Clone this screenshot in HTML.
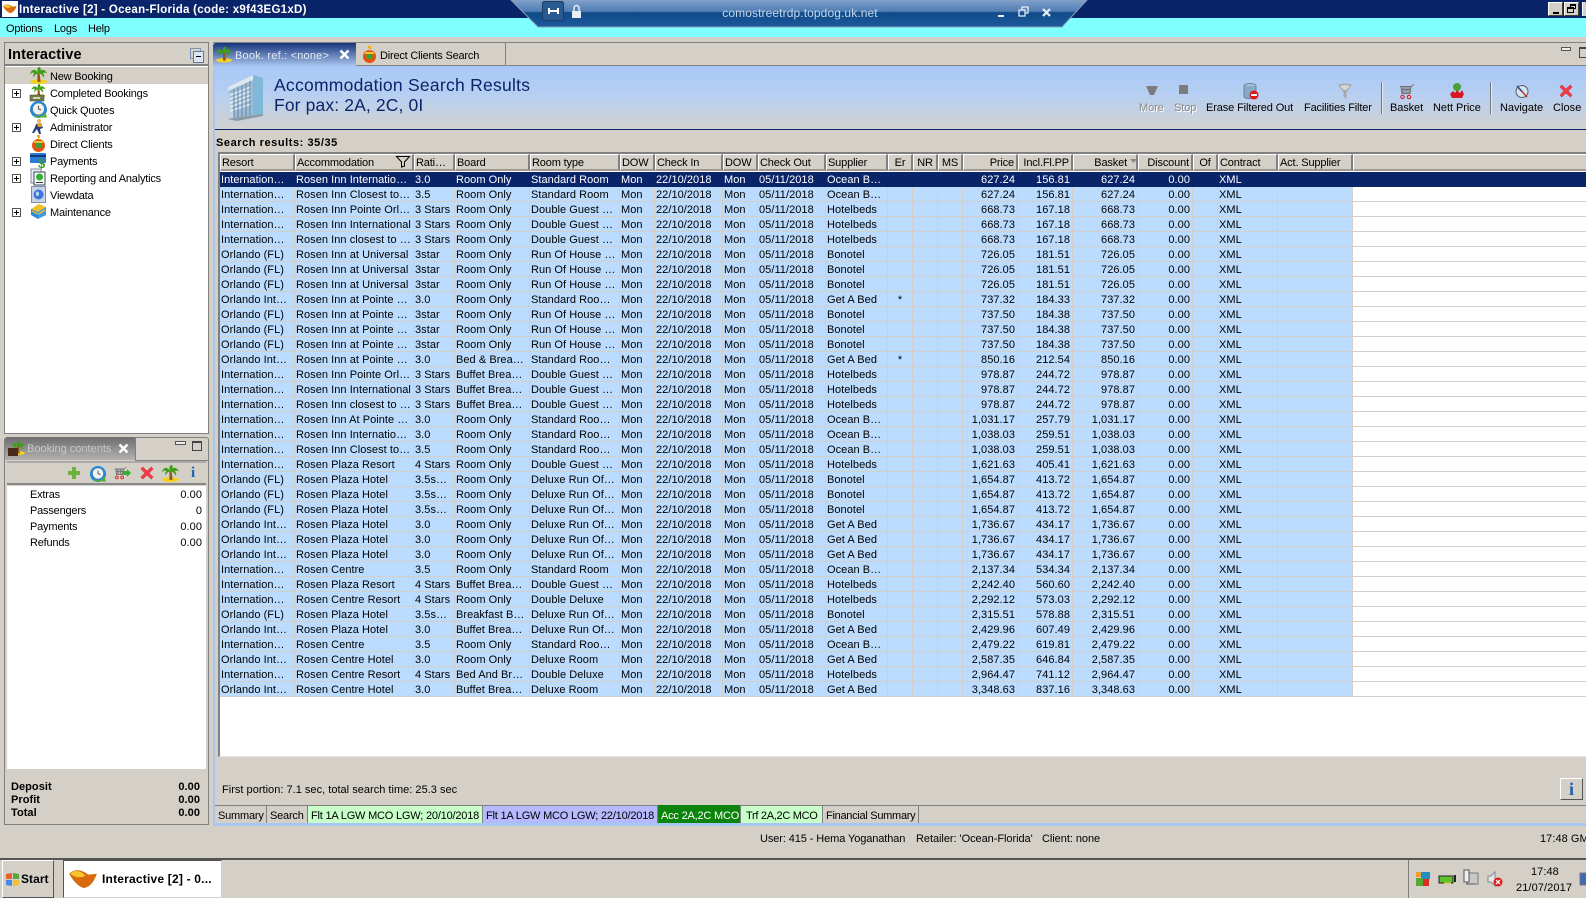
<!DOCTYPE html>
<html><head><meta charset="utf-8"><title>Interactive</title>
<style>
html,body{margin:0;padding:0;width:1586px;height:898px;overflow:hidden;background:#d4d0c8}
body{position:relative;font:11px/17px "Liberation Sans",Arial,sans-serif;color:#000;letter-spacing:.05px}
.a{position:absolute;white-space:nowrap}
.t{letter-spacing:-.2px}
svg{position:absolute;overflow:visible}
.b{font-weight:bold}
table{position:absolute;left:220px;top:172px;border-collapse:separate;border-spacing:0;table-layout:fixed;width:1133px;background:#bbdcff}
td{height:12px;padding:2px 0 0 1px;line-height:12px;border-right:1px solid #d4d0c8;border-bottom:1px solid #d4d0c8;overflow:hidden;white-space:nowrap;box-sizing:content-box}
td:nth-child(14),td:nth-child(15),td:nth-child(16),td:nth-child(17){text-align:right;padding:2px 2px 0 0}
td:nth-child(11){text-align:center;padding:2px 0 0 0}
tr.s td{background:#0a246a;color:#fff;border-color:#0a246a}
.h{position:absolute;top:154px;height:17px;box-sizing:border-box;background:#d4d0c8;border-top:1px solid #fff;border-left:1px solid #fff;border-right:2px solid #808080;border-bottom:2px solid #a09c94;line-height:17px;padding-left:1px;white-space:nowrap;overflow:hidden;letter-spacing:-.15px}
.r{text-align:right;padding-right:2px;padding-left:0}
.tab{position:absolute;top:805px;height:17px;line-height:21px;box-sizing:border-box;border-right:1px solid #808080;padding-left:3px;white-space:nowrap;letter-spacing:-.2px}
.px{position:absolute;width:9px;height:9px;box-sizing:border-box;border:1px solid #555;background:#fff;left:12px}
.px:before{content:"";position:absolute;left:1px;right:1px;top:3px;height:1px;background:#000}
.px:after{content:"";position:absolute;top:1px;bottom:1px;left:3px;width:1px;background:#000}
</style></head><body>
<svg width="0" height="0" style="position:absolute">
<defs>
<symbol id="palm" viewBox="0 0 16 16"><ellipse cx="8" cy="13.8" rx="8" ry="2.200" fill="#f5d020"/><path d="M7 6h2l1 8H7z" fill="#8a5a20"/><path d="M8 6C5 1 1 2 0 7c2-2 3-2 4-1-1 1-1 2-1 4 1-2 3-4 5-4zM8 6c2-5 6-4 8 0-2-1-3-1-4 0 1 1 2 2 1 4-1-2-3-4-5-4zM8 6C6 3 7 0 9 0c2 1 1 4-1 6z" fill="#3f9e16"/></symbol>
<symbol id="clock" viewBox="0 0 16 16"><circle cx="8" cy="8" r="8" fill="#1e88e0"/><circle cx="8" cy="7.500" r="5.500" fill="#eef2f4" stroke="#777" stroke-width=".5"/><path d="M8 4.500V7.500L10.500 8.500" stroke="#555" fill="none"/><path d="M3.500 12.500C7 15.500 12 15 14.500 10.500l1.500 5H5z" fill="#58b030"/></symbol>
<symbol id="x" viewBox="0 0 16 16"><path d="M3 1l5 4.500L13 1l2 2.500L10.500 8l4.500 4.500-2 2.500L8 10.500 3 15l-2-2.500L5.500 8 1 3.500z" fill="#ee3b46" stroke="#c72530" stroke-width=".5"/></symbol>
<symbol id="logo" viewBox="0 0 30 22"><path d="M0 6C6 0 14 2 20 7l9-1c-2 6-6 14-14 15C9 19 3 12 0 6z" fill="#d86a10"/><path d="M1 6c5-5 12-3 16 2-5 3-11 2-16-2z" fill="#f7c52c"/></symbol>
<symbol id="cart" viewBox="0 0 16 16"><path d="M1 3h11l3-2M2 3l1 7h8l1-7M4 3v7M6 3v7M8 3v7M10 3v7M2.500 6h9" fill="none" stroke="#6e6e6e"/><circle cx="3.500" cy="13.500" r="1.700" fill="none" stroke="#e01010"/><circle cx="10" cy="13.500" r="1.700" fill="none" stroke="#e01010"/></symbol>
</defs></svg>

<!-- title bar -->
<div class="a" style="left:0;top:0;width:1586px;height:18px;background:#0a246a"></div>
<div class="a" style="left:2px;top:1px;width:16px;height:16px;background:#fff"></div>
<svg style="left:3px;top:3px" width="14" height="11"><use href="#logo" width="14" height="11"/></svg>
<div class="a b" style="left:19px;top:2px;color:#fff;font-size:11.5px;line-height:16px;letter-spacing:.27px">Interactive [2] - Ocean-Florida (code: x9f43EG1xD)</div>
<div class="a" style="left:0;top:18px;width:1586px;height:19px;background:#80ffff"></div>
<div class="a t" style="left:6px;top:21px">Options</div>
<div class="a t" style="left:54px;top:21px">Logs</div>
<div class="a t" style="left:88px;top:21px">Help</div>

<!-- window buttons -->
<div class="a" style="left:1548px;top:2px;width:15px;height:14px;box-sizing:border-box;background:#d4d0c8;border:1px solid;border-color:#fff #404040 #404040 #fff"><div class="a" style="left:4px;top:9px;width:6px;height:2px;background:#000"></div></div>
<div class="a" style="left:1564px;top:2px;width:15px;height:14px;box-sizing:border-box;background:#d4d0c8;border:1px solid;border-color:#fff #404040 #404040 #fff"><div class="a" style="left:5px;top:1px;width:6px;height:5px;border:1px solid #000;border-top-width:2px;box-sizing:border-box"></div><div class="a" style="left:2px;top:4px;width:7px;height:6px;border:1px solid #000;border-top-width:2px;box-sizing:border-box;background:#d4d0c8"></div></div>
<div class="a" style="left:1582px;top:2px;width:4px;height:14px;background:#d4d0c8;border-left:1px solid #fff"></div>

<!-- RDP bar -->
<svg style="left:0;top:0" width="1586" height="30">
<defs><linearGradient id="rdp" x1="0" y1="0" x2="0" y2="1"><stop offset="0" stop-color="#80a0cc"/><stop offset=".42" stop-color="#4f7db3"/><stop offset=".47" stop-color="#104a88"/><stop offset="1" stop-color="#1c5a9c"/></linearGradient></defs>
<path d="M511 0H1087L1062 27H538z" fill="url(#rdp)" stroke="#8ba0b8" stroke-width="1"/>
<rect x="542.500" y="1.500" width="21" height="19" rx="2" fill="#2a5a90" stroke="#1c3c68"/>
<path d="M549 8v6M558 8v6M550 11h8" fill="none" stroke="#fff" stroke-width="2"/>
<path d="M572 11h9v7h-9z" fill="#e6edf4"/><path d="M574 11V8a2.500 2.500 0 0 1 5 0v3" fill="none" stroke="#e6edf4" stroke-width="1.500"/>
<path d="M998 16h6" stroke="#e6edf4" stroke-width="2"/>
<path d="M1019 10h6v6h-6zM1022 10V7h6v6h-3" fill="none" stroke="#e6edf4" stroke-width="1.300"/>
<path d="M1043 9l7 7M1050 9l-7 7" stroke="#e6edf4" stroke-width="2.200"/>
</svg>
<div class="a" style="left:722px;top:5px;width:156px;text-align:center;color:#c5d6ea;font-size:12px;letter-spacing:.1px">comostreetrdp.topdog.uk.net</div>

<!-- left top panel -->
<div class="a" style="left:4px;top:42px;width:205px;height:392px;box-sizing:border-box;border:1px solid #808080;background:#fff"></div>
<div class="a" style="left:5px;top:43px;width:203px;height:23px;background:#d4d0c8;border-bottom:2px solid #808080;box-sizing:border-box"></div>
<div class="a b" style="left:8px;top:47px;font-size:14.5px;line-height:16px;letter-spacing:.1px">Interactive</div>
<div class="a" style="left:190px;top:48px;width:9px;height:9px;border:1px solid #7d94b8"></div>
<div class="a" style="left:193px;top:51px;width:9px;height:10px;border:1px solid #5a7aa8;background:#dde6f2"><div class="a" style="left:2px;top:4px;width:5px;height:1px;background:#000"></div></div>
<div class="a" style="left:5px;top:67px;width:203px;height:17px;background:#d4d0c8"></div>
<div class="a t" style="left:50px;top:69px">New Booking</div>
<div class="a t" style="left:50px;top:86px">Completed Bookings</div>
<div class="a t" style="left:50px;top:103px">Quick Quotes</div>
<div class="a t" style="left:50px;top:120px">Administrator</div>
<div class="a t" style="left:50px;top:137px">Direct Clients</div>
<div class="a t" style="left:50px;top:154px">Payments</div>
<div class="a t" style="left:50px;top:171px">Reporting and Analytics</div>
<div class="a t" style="left:50px;top:188px">Viewdata</div>
<div class="a t" style="left:50px;top:205px">Maintenance</div>
<div class="px" style="top:89px"></div><div class="px" style="top:123px"></div><div class="px" style="top:157px"></div><div class="px" style="top:174px"></div><div class="px" style="top:208px"></div>
<svg style="left:30px;top:67px" width="17" height="17"><use href="#palm" width="17" height="17"/></svg>
<svg style="left:30px;top:84px" width="17" height="17"><use href="#palm" width="17" height="14"/><rect x="0" y="11" width="14" height="6" fill="#6f7d4a" stroke="#444" stroke-width=".5"/><rect x="3" y="13" width="7" height="2" fill="#d8d8b0"/></svg>
<svg style="left:30px;top:101px" width="17" height="17"><use href="#clock" width="17" height="17"/></svg>
<svg style="left:31px;top:118px" width="16" height="17"><circle cx="8" cy="3" r="2" fill="#e8b070"/><path d="M5 6l5-1 2 5-3 1 1 5H8L6 11 3 15H1l3-6z" fill="#283c7a"/><path d="M6 6l4-1 1 4H7z" fill="#e0a020"/></svg>
<svg style="left:31px;top:135px" width="15" height="17"><circle cx="7.500" cy="10.500" r="6.500" fill="#e85010"/><rect x="4.500" y="8" width="6" height="5" fill="#3da030"/><path d="M6 0h3v3H8v2H7V2H6z" fill="#f0b010"/><path d="M3 6h9v2H3z" fill="#f5c030"/></svg>
<svg style="left:30px;top:152px" width="17" height="17"><rect x="0" y="1" width="16" height="10" rx="1" fill="#2a7ad8"/><rect x="0" y="3" width="16" height="2" fill="#103a78"/><text x="8" y="16" font-family="Liberation Sans" font-weight="bold" font-size="13" fill="#3aa020">$</text></svg>
<svg style="left:31px;top:169px" width="15" height="17"><rect x="0" y="0" width="10" height="14" fill="#e8eef5" stroke="#7a8aa0"/><rect x="3" y="3" width="11" height="13" fill="#fff" stroke="#345"/><circle cx="8.500" cy="8" r="3.500" fill="#30b030"/><rect x="5" y="13" width="7" height="1" fill="#333"/></svg>
<svg style="left:31px;top:186px" width="15" height="17"><rect x=".5" y=".5" width="14" height="16" fill="#c8d4e6" stroke="#7f8ea8"/><circle cx="7.500" cy="8.500" r="5" fill="#3c78d8"/><path d="M5 6c2-1 3 0 3 2s-2 3-3 1z" fill="#b8d8f8"/></svg>
<svg style="left:30px;top:203px" width="17" height="17"><path d="M1 6l8-5 7 3-8 5z" fill="#f0c028"/><path d="M1 6l7 3v7L1 12z" fill="#2a8ad8"/><path d="M8 9l8-5v8l-8 4z" fill="#3a9ae8"/><path d="M2 8l6 3M9 11l6-4" stroke="#f0c028" stroke-width="1.500"/></svg>

<!-- booking contents -->
<div class="a" style="left:4px;top:437px;width:205px;height:388px;box-sizing:border-box;border:1px solid #808080;border-radius:3px 3px 0 0"></div>
<div class="a" style="left:5px;top:437px;width:131px;height:23px;background:linear-gradient(#6d6d6f,#b4b2b0);border-radius:3px 3px 0 0"></div>
<div class="a" style="left:135px;top:460px;width:73px;height:1px;background:#808080"></div>
<div class="a" style="left:135px;top:437px;width:1px;height:24px;background:#808080"></div>
<svg style="left:8px;top:440px" width="17" height="17"><use href="#palm" x="3" width="14" height="16"/><rect x="0" y="8" width="10" height="8" fill="#4a2a18"/></svg>
<div class="a" style="left:27px;top:441px;color:#c9c9c6;letter-spacing:0">Booking contents</div>
<svg style="left:118px;top:443px" width="11" height="11"><path d="M1.500 1.500l8 8M9.500 1.500l-8 8" stroke="#fff" stroke-width="2.500"/></svg>
<div class="a" style="left:175px;top:441px;width:9px;height:2px;border:1px solid #555;background:#eee"></div>
<div class="a" style="left:192px;top:441px;width:8px;height:7px;border:1px solid #444;border-top-width:2px"></div>
<div class="a" style="left:7px;top:461px;width:199px;height:24px;background:#d4d0c8;border-top:2px solid #aaa;border-bottom:2px solid #888;box-sizing:border-box"></div>
<svg style="left:68px;top:467px" width="12" height="12"><path d="M4 0h4v4h4v4H8v4H4V8H0V4h4z" fill="#6cb23c"/></svg>
<svg style="left:90px;top:466px" width="16" height="16"><use href="#clock" width="16" height="16"/></svg>
<svg style="left:114px;top:465px" width="17" height="16"><use href="#cart" width="13" height="16"/><path d="M9 6h4V4l4 4-4 4v-2H9z" fill="#30b030"/></svg>
<svg style="left:140px;top:466px" width="14" height="14"><use href="#x" width="14" height="14"/></svg>
<svg style="left:162px;top:465px" width="17" height="17"><use href="#palm" width="17" height="17"/></svg>
<div class="a b" style="left:191px;top:465px;font:bold 15px/16px 'Liberation Serif',serif;color:#1d5fb0">i</div>
<div class="a" style="left:7px;top:486px;width:199px;height:283px;background:#fff"></div>
<div class="a t" style="left:30px;top:487px">Extras</div><div class="a" style="right:1384px;top:487px">0.00</div>
<div class="a t" style="left:30px;top:503px">Passengers</div><div class="a" style="right:1384px;top:503px">0</div>
<div class="a t" style="left:30px;top:519px">Payments</div><div class="a" style="right:1384px;top:519px">0.00</div>
<div class="a t" style="left:30px;top:535px">Refunds</div><div class="a" style="right:1384px;top:535px">0.00</div>
<div class="a b" style="left:11px;top:779px">Deposit</div><div class="a b" style="right:1386px;top:779px">0.00</div>
<div class="a b" style="left:11px;top:792px">Profit</div><div class="a b" style="right:1386px;top:792px">0.00</div>
<div class="a b" style="left:11px;top:805px">Total</div><div class="a b" style="right:1386px;top:805px">0.00</div>

<!-- right panel -->
<div class="a" style="left:213px;top:43px;width:1373px;height:783px;box-sizing:border-box;border-left:2px solid #a6c8f0;border-bottom:3px solid #a6c8f0"></div>
<div class="a" style="left:213px;top:42px;width:1373px;height:1px;background:#808080"></div>
<div class="a" style="left:213px;top:65px;width:1373px;height:1px;background:#808080"></div>
<div class="a" style="left:213px;top:43px;width:143px;height:23px;background:linear-gradient(#17357c,#a8c4ec);border-radius:3px 0 0 0"></div>
<svg style="left:216px;top:46px" width="16" height="17"><use href="#palm" width="16" height="17"/></svg>
<div class="a" style="left:235px;top:48px;color:#e4ebf5;letter-spacing:.2px">Book. ref.: &lt;none&gt;</div>
<svg style="left:339px;top:49px" width="11" height="11"><path d="M1.500 1.500l8 8M9.500 1.500l-8 8" stroke="#fff" stroke-width="2.500"/></svg>
<div class="a" style="left:505px;top:43px;width:1px;height:22px;background:#808080"></div>
<svg style="left:362px;top:46px" width="15" height="17"><circle cx="7.500" cy="10.500" r="6.500" fill="#e85010"/><rect x="4.500" y="8" width="6" height="5" fill="#3da030"/><path d="M6 0h3v3H8v2H7V2H6z" fill="#f0b010"/><path d="M3 6h9v2H3z" fill="#f5c030"/></svg>
<div class="a t" style="left:380px;top:48px">Direct Clients Search</div>
<div class="a" style="left:1561px;top:47px;width:8px;height:2px;border:1px solid #555;background:#eee"></div>
<div class="a" style="left:1579px;top:47px;width:8px;height:8px;border:1px solid #444;border-top-width:2px"></div>

<!-- banner -->
<div class="a" style="left:215px;top:66px;width:1371px;height:63px;background:linear-gradient(#a8c8f7,#b6cff2 45%,#d2d2d0)"></div>
<div class="a" style="left:215px;top:129px;width:1371px;height:1px;background:#0a246a"></div>
<svg style="left:227px;top:73px" width="38" height="48">
<path d="M1 14L26 2v42L8 47z" fill="#9cbcd6"/><path d="M26 2l10 3v36l-10 4z" fill="#7fb8d8"/><path d="M1 14L26 2v5L1 18z" fill="#dfe7ee"/>
<path d="M3 22L24 14M3 26L24 18M3 30L24 22M3 34L24 26M3 38L24 31" stroke="#e8f0f6" stroke-width="1.500"/>
<path d="M7 16v30M11 14v32M15 12v33M19 10v34M23 8v36" stroke="#6488a6" stroke-width="1"/><path d="M0 46l36-5v2L10 48z" fill="#8a9aa6"/>
</svg>
<div class="a" style="left:274px;top:75px;font-size:17.5px;line-height:20px;color:#0a246a;letter-spacing:.26px">Accommodation Search Results</div>
<div class="a" style="left:274px;top:95px;font-size:17.5px;line-height:20px;color:#0a246a;letter-spacing:.13px">For pax: 2A, 2C, 0I</div>

<!-- toolbar -->
<svg style="left:1145px;top:84px" width="14" height="12"><path d="M1 2h12L9 11H5z" fill="#7c7c7c"/></svg>
<svg style="left:1179px;top:85px" width="9" height="9"><rect width="9" height="9" fill="#7c7c7c"/></svg>
<svg style="left:1243px;top:83px" width="16" height="17"><ellipse cx="7" cy="3" rx="6" ry="2.500" fill="#a8c0d8" stroke="#6f8296"/><path d="M1 3v11c2 2 10 2 12 0V3" fill="#88a8c8" stroke="#6f8296"/><circle cx="11" cy="12" r="4.500" fill="#e01818"/><rect x="8" y="11" width="6" height="2" fill="#fff"/></svg>
<svg style="left:1338px;top:83px" width="14" height="17"><path d="M0 2c3-2 11-2 14 0L8.500 9v7l-3-2V9z" fill="#a8a8a8"/><path d="M2 3c3-1 7-1 10 0L8 7H6z" fill="#d8d8d8"/></svg>
<svg style="left:1399px;top:83px" width="16" height="17"><use href="#cart" width="16" height="17"/></svg>
<svg style="left:1449px;top:83px" width="16" height="16"><circle cx="8" cy="4" r="4" fill="#48a038"/><path d="M1 11l3-3 2 2 2-3 3 3 2-3 2 4-2 4H3z" fill="#d81820"/></svg>
<svg style="left:1514px;top:83px" width="16" height="17"><circle cx="8" cy="8.500" r="6" fill="#d8e4f0" stroke="#506070"/><path d="M3 3l10 11" stroke="#c83020" stroke-width="1.500"/><path d="M3 3L8 8.500" stroke="#2050a0" stroke-width="1.500"/></svg>
<svg style="left:1559px;top:84px" width="14" height="14"><use href="#x" width="14" height="14"/></svg>
<div class="a" style="left:1139px;top:100px;color:#888;text-shadow:1px 1px 0 #fff;letter-spacing:-.1px">More</div>
<div class="a" style="left:1174px;top:100px;color:#888;text-shadow:1px 1px 0 #fff;letter-spacing:-.1px">Stop</div>
<div class="a" style="left:1206px;top:100px;letter-spacing:-.12px">Erase Filtered Out</div>
<div class="a" style="left:1304px;top:100px;letter-spacing:-.15px">Facilities Filter</div>
<div class="a" style="left:1390px;top:100px;letter-spacing:-.1px">Basket</div>
<div class="a" style="left:1433px;top:100px;letter-spacing:-.05px">Nett Price</div>
<div class="a" style="left:1500px;top:100px;letter-spacing:-.05px">Navigate</div>
<div class="a" style="left:1553px;top:100px">Close</div>
<div class="a" style="left:1381px;top:82px;width:2px;height:32px;background:#e8e8e8;border-left:1px solid #777;box-sizing:border-box"></div>
<div class="a" style="left:1490px;top:82px;width:2px;height:32px;background:#e8e8e8;border-left:1px solid #777;box-sizing:border-box"></div>

<div class="a b" style="left:216px;top:135px;letter-spacing:.56px">Search results: 35/35</div>

<!-- grid frame -->
<div class="a" style="left:218px;top:152px;width:1368px;height:605px;background:#fff;border-top:2px solid #808080;border-left:2px solid #808080;border-bottom:1px solid #e8e4dc;box-sizing:border-box"></div>
<div class="a" style="left:1353px;top:172px;width:233px;height:525px;background:repeating-linear-gradient(#fff 0 14px,#d4d0c8 14px 15px)"></div>
<div class="h" style="left:220px;width:75px">Resort</div>
<div class="h" style="left:295px;width:119px">Accommodation<svg style="left:100px;top:1px" width="14" height="11"><path d="M.5.5h13L8.500 6v4l-3 1V6z" fill="none" stroke="#000"/></svg></div>
<div class="h" style="left:414px;width:41px">Rati…</div>
<div class="h" style="left:455px;width:75px">Board</div>
<div class="h" style="left:530px;width:90px">Room type</div>
<div class="h" style="left:620px;width:35px">DOW</div>
<div class="h" style="left:655px;width:68px">Check In</div>
<div class="h" style="left:723px;width:35px">DOW</div>
<div class="h" style="left:758px;width:68px">Check Out</div>
<div class="h" style="left:826px;width:62px">Supplier</div>
<div class="h" style="left:888px;width:25px;text-align:center;padding:0">Er</div>
<div class="h" style="left:913px;width:25px;text-align:center;padding:0">NR</div>
<div class="h" style="left:938px;width:25px;text-align:center;padding:0">MS</div>
<div class="h r" style="left:963px;width:55px">Price</div>
<div class="h r" style="left:1018px;width:55px">Incl.Fl.PP</div>
<div class="h r" style="left:1073px;width:65px;padding-right:9px">Basket<svg style="left:56px;top:4px" width="7" height="4"><path d="M0 0h7L3.500 4z" fill="#8a8a8a"/></svg></div>
<div class="h r" style="left:1138px;width:55px">Discount</div>
<div class="h" style="left:1193px;width:25px;text-align:center;padding:0">Of</div>
<div class="h" style="left:1218px;width:60px">Contract</div>
<div class="h" style="left:1278px;width:75px">Act. Supplier</div>
<div class="h" style="left:1353px;width:233px;border-right:0"></div>

<table>
<colgroup><col style="width:75px"><col style="width:119px"><col style="width:41px"><col style="width:75px"><col style="width:90px"><col style="width:35px"><col style="width:68px"><col style="width:35px"><col style="width:68px"><col style="width:62px"><col style="width:25px"><col style="width:25px"><col style="width:25px"><col style="width:55px"><col style="width:55px"><col style="width:65px"><col style="width:55px"><col style="width:25px"><col style="width:60px"><col style="width:75px"></colgroup>
<tr class="s"><td>Internation…<td>Rosen Inn Internatio…<td>3.0<td>Room Only<td>Standard Room<td>Mon<td>22/10/2018<td>Mon<td>05/11/2018<td>Ocean B…<td><td><td><td>627.24<td>156.81<td>627.24<td>0.00<td><td>XML<td>
<tr><td>Internation…<td>Rosen Inn Closest to…<td>3.5<td>Room Only<td>Standard Room<td>Mon<td>22/10/2018<td>Mon<td>05/11/2018<td>Ocean B…<td><td><td><td>627.24<td>156.81<td>627.24<td>0.00<td><td>XML<td>
<tr><td>Internation…<td>Rosen Inn Pointe Orl…<td>3 Stars<td>Room Only<td>Double Guest …<td>Mon<td>22/10/2018<td>Mon<td>05/11/2018<td>Hotelbeds<td><td><td><td>668.73<td>167.18<td>668.73<td>0.00<td><td>XML<td>
<tr><td>Internation…<td>Rosen Inn International<td>3 Stars<td>Room Only<td>Double Guest …<td>Mon<td>22/10/2018<td>Mon<td>05/11/2018<td>Hotelbeds<td><td><td><td>668.73<td>167.18<td>668.73<td>0.00<td><td>XML<td>
<tr><td>Internation…<td>Rosen Inn closest to …<td>3 Stars<td>Room Only<td>Double Guest …<td>Mon<td>22/10/2018<td>Mon<td>05/11/2018<td>Hotelbeds<td><td><td><td>668.73<td>167.18<td>668.73<td>0.00<td><td>XML<td>
<tr><td>Orlando (FL)<td>Rosen Inn at Universal<td>3star<td>Room Only<td>Run Of House …<td>Mon<td>22/10/2018<td>Mon<td>05/11/2018<td>Bonotel<td><td><td><td>726.05<td>181.51<td>726.05<td>0.00<td><td>XML<td>
<tr><td>Orlando (FL)<td>Rosen Inn at Universal<td>3star<td>Room Only<td>Run Of House …<td>Mon<td>22/10/2018<td>Mon<td>05/11/2018<td>Bonotel<td><td><td><td>726.05<td>181.51<td>726.05<td>0.00<td><td>XML<td>
<tr><td>Orlando (FL)<td>Rosen Inn at Universal<td>3star<td>Room Only<td>Run Of House …<td>Mon<td>22/10/2018<td>Mon<td>05/11/2018<td>Bonotel<td><td><td><td>726.05<td>181.51<td>726.05<td>0.00<td><td>XML<td>
<tr><td>Orlando Int…<td>Rosen Inn at Pointe …<td>3.0<td>Room Only<td>Standard Roo…<td>Mon<td>22/10/2018<td>Mon<td>05/11/2018<td>Get A Bed<td>*<td><td><td>737.32<td>184.33<td>737.32<td>0.00<td><td>XML<td>
<tr><td>Orlando (FL)<td>Rosen Inn at Pointe …<td>3star<td>Room Only<td>Run Of House …<td>Mon<td>22/10/2018<td>Mon<td>05/11/2018<td>Bonotel<td><td><td><td>737.50<td>184.38<td>737.50<td>0.00<td><td>XML<td>
<tr><td>Orlando (FL)<td>Rosen Inn at Pointe …<td>3star<td>Room Only<td>Run Of House …<td>Mon<td>22/10/2018<td>Mon<td>05/11/2018<td>Bonotel<td><td><td><td>737.50<td>184.38<td>737.50<td>0.00<td><td>XML<td>
<tr><td>Orlando (FL)<td>Rosen Inn at Pointe …<td>3star<td>Room Only<td>Run Of House …<td>Mon<td>22/10/2018<td>Mon<td>05/11/2018<td>Bonotel<td><td><td><td>737.50<td>184.38<td>737.50<td>0.00<td><td>XML<td>
<tr><td>Orlando Int…<td>Rosen Inn at Pointe …<td>3.0<td>Bed &amp; Brea…<td>Standard Roo…<td>Mon<td>22/10/2018<td>Mon<td>05/11/2018<td>Get A Bed<td>*<td><td><td>850.16<td>212.54<td>850.16<td>0.00<td><td>XML<td>
<tr><td>Internation…<td>Rosen Inn Pointe Orl…<td>3 Stars<td>Buffet Brea…<td>Double Guest …<td>Mon<td>22/10/2018<td>Mon<td>05/11/2018<td>Hotelbeds<td><td><td><td>978.87<td>244.72<td>978.87<td>0.00<td><td>XML<td>
<tr><td>Internation…<td>Rosen Inn International<td>3 Stars<td>Buffet Brea…<td>Double Guest …<td>Mon<td>22/10/2018<td>Mon<td>05/11/2018<td>Hotelbeds<td><td><td><td>978.87<td>244.72<td>978.87<td>0.00<td><td>XML<td>
<tr><td>Internation…<td>Rosen Inn closest to …<td>3 Stars<td>Buffet Brea…<td>Double Guest …<td>Mon<td>22/10/2018<td>Mon<td>05/11/2018<td>Hotelbeds<td><td><td><td>978.87<td>244.72<td>978.87<td>0.00<td><td>XML<td>
<tr><td>Internation…<td>Rosen Inn At Pointe …<td>3.0<td>Room Only<td>Standard Roo…<td>Mon<td>22/10/2018<td>Mon<td>05/11/2018<td>Ocean B…<td><td><td><td>1,031.17<td>257.79<td>1,031.17<td>0.00<td><td>XML<td>
<tr><td>Internation…<td>Rosen Inn Internatio…<td>3.0<td>Room Only<td>Standard Roo…<td>Mon<td>22/10/2018<td>Mon<td>05/11/2018<td>Ocean B…<td><td><td><td>1,038.03<td>259.51<td>1,038.03<td>0.00<td><td>XML<td>
<tr><td>Internation…<td>Rosen Inn Closest to…<td>3.5<td>Room Only<td>Standard Roo…<td>Mon<td>22/10/2018<td>Mon<td>05/11/2018<td>Ocean B…<td><td><td><td>1,038.03<td>259.51<td>1,038.03<td>0.00<td><td>XML<td>
<tr><td>Internation…<td>Rosen Plaza Resort<td>4 Stars<td>Room Only<td>Double Guest …<td>Mon<td>22/10/2018<td>Mon<td>05/11/2018<td>Hotelbeds<td><td><td><td>1,621.63<td>405.41<td>1,621.63<td>0.00<td><td>XML<td>
<tr><td>Orlando (FL)<td>Rosen Plaza Hotel<td>3.5s…<td>Room Only<td>Deluxe Run Of…<td>Mon<td>22/10/2018<td>Mon<td>05/11/2018<td>Bonotel<td><td><td><td>1,654.87<td>413.72<td>1,654.87<td>0.00<td><td>XML<td>
<tr><td>Orlando (FL)<td>Rosen Plaza Hotel<td>3.5s…<td>Room Only<td>Deluxe Run Of…<td>Mon<td>22/10/2018<td>Mon<td>05/11/2018<td>Bonotel<td><td><td><td>1,654.87<td>413.72<td>1,654.87<td>0.00<td><td>XML<td>
<tr><td>Orlando (FL)<td>Rosen Plaza Hotel<td>3.5s…<td>Room Only<td>Deluxe Run Of…<td>Mon<td>22/10/2018<td>Mon<td>05/11/2018<td>Bonotel<td><td><td><td>1,654.87<td>413.72<td>1,654.87<td>0.00<td><td>XML<td>
<tr><td>Orlando Int…<td>Rosen Plaza Hotel<td>3.0<td>Room Only<td>Deluxe Run Of…<td>Mon<td>22/10/2018<td>Mon<td>05/11/2018<td>Get A Bed<td><td><td><td>1,736.67<td>434.17<td>1,736.67<td>0.00<td><td>XML<td>
<tr><td>Orlando Int…<td>Rosen Plaza Hotel<td>3.0<td>Room Only<td>Deluxe Run Of…<td>Mon<td>22/10/2018<td>Mon<td>05/11/2018<td>Get A Bed<td><td><td><td>1,736.67<td>434.17<td>1,736.67<td>0.00<td><td>XML<td>
<tr><td>Orlando Int…<td>Rosen Plaza Hotel<td>3.0<td>Room Only<td>Deluxe Run Of…<td>Mon<td>22/10/2018<td>Mon<td>05/11/2018<td>Get A Bed<td><td><td><td>1,736.67<td>434.17<td>1,736.67<td>0.00<td><td>XML<td>
<tr><td>Internation…<td>Rosen Centre<td>3.5<td>Room Only<td>Standard Room<td>Mon<td>22/10/2018<td>Mon<td>05/11/2018<td>Ocean B…<td><td><td><td>2,137.34<td>534.34<td>2,137.34<td>0.00<td><td>XML<td>
<tr><td>Internation…<td>Rosen Plaza Resort<td>4 Stars<td>Buffet Brea…<td>Double Guest …<td>Mon<td>22/10/2018<td>Mon<td>05/11/2018<td>Hotelbeds<td><td><td><td>2,242.40<td>560.60<td>2,242.40<td>0.00<td><td>XML<td>
<tr><td>Internation…<td>Rosen Centre Resort<td>4 Stars<td>Room Only<td>Double Deluxe<td>Mon<td>22/10/2018<td>Mon<td>05/11/2018<td>Hotelbeds<td><td><td><td>2,292.12<td>573.03<td>2,292.12<td>0.00<td><td>XML<td>
<tr><td>Orlando (FL)<td>Rosen Plaza Hotel<td>3.5s…<td>Breakfast B…<td>Deluxe Run Of…<td>Mon<td>22/10/2018<td>Mon<td>05/11/2018<td>Bonotel<td><td><td><td>2,315.51<td>578.88<td>2,315.51<td>0.00<td><td>XML<td>
<tr><td>Orlando Int…<td>Rosen Plaza Hotel<td>3.0<td>Buffet Brea…<td>Deluxe Run Of…<td>Mon<td>22/10/2018<td>Mon<td>05/11/2018<td>Get A Bed<td><td><td><td>2,429.96<td>607.49<td>2,429.96<td>0.00<td><td>XML<td>
<tr><td>Internation…<td>Rosen Centre<td>3.5<td>Room Only<td>Standard Roo…<td>Mon<td>22/10/2018<td>Mon<td>05/11/2018<td>Ocean B…<td><td><td><td>2,479.22<td>619.81<td>2,479.22<td>0.00<td><td>XML<td>
<tr><td>Orlando Int…<td>Rosen Centre Hotel<td>3.0<td>Room Only<td>Deluxe Room<td>Mon<td>22/10/2018<td>Mon<td>05/11/2018<td>Get A Bed<td><td><td><td>2,587.35<td>646.84<td>2,587.35<td>0.00<td><td>XML<td>
<tr><td>Internation…<td>Rosen Centre Resort<td>4 Stars<td>Bed And Br…<td>Double Deluxe<td>Mon<td>22/10/2018<td>Mon<td>05/11/2018<td>Hotelbeds<td><td><td><td>2,964.47<td>741.12<td>2,964.47<td>0.00<td><td>XML<td>
<tr><td>Orlando Int…<td>Rosen Centre Hotel<td>3.0<td>Buffet Brea…<td>Deluxe Room<td>Mon<td>22/10/2018<td>Mon<td>05/11/2018<td>Get A Bed<td><td><td><td>3,348.63<td>837.16<td>3,348.63<td>0.00<td><td>XML<td>
</table>
<div class="a" style="left:1353px;top:172px;width:233px;height:15px;background:#0a246a"></div>

<div class="a" style="left:222px;top:782px;letter-spacing:.02px">First portion: 7.1 sec, total search time: 25.3 sec</div>
<div class="a" style="left:1560px;top:778px;width:23px;height:22px;box-sizing:border-box;background:#d4d0c8;border:1px solid;border-color:#fff #555 #555 #fff;text-align:center;font:bold 18px/20px 'Liberation Serif',serif;color:#1d5fb0">i</div>

<!-- bottom tabs -->
<div class="a" style="left:215px;top:805px;width:1371px;height:1px;background:#808080"></div>
<div class="a" style="left:215px;top:806px;width:1371px;height:16px;background:#d4d0c8"></div>
<div class="tab" style="left:215px;width:52px;top:806px">Summary</div>
<div class="tab" style="left:267px;width:41px;top:806px">Search</div>
<div class="tab" style="left:308px;width:175px;top:806px;background:#c8ffc8">Flt 1A LGW MCO LGW; 20/10/2018</div>
<div class="tab" style="left:483px;width:175px;top:806px;background:#b8b8ff">Flt 1A LGW MCO LGW; 22/10/2018</div>
<div class="tab" style="left:658px;width:83px;top:805px;height:18px;line-height:23px;background:#0a840a;color:#fff">Acc 2A,2C MCO</div>
<div class="tab" style="left:741px;width:82px;top:806px;padding-left:5px;background:#c8ffc8;letter-spacing:-.3px">Trf 2A,2C MCO</div>
<div class="tab" style="left:823px;width:96px;top:806px;letter-spacing:-.28px">Financial Summary</div>

<!-- status -->
<div class="a" style="left:760px;top:831px;letter-spacing:-.1px">User: 415 - Hema Yoganathan</div>
<div class="a" style="left:916px;top:831px;letter-spacing:-.05px">Retailer: 'Ocean-Florida'</div>
<div class="a" style="left:1042px;top:831px;letter-spacing:-.05px">Client: none</div>
<div class="a" style="left:1540px;top:831px">17:48 GMT</div>

<!-- taskbar -->
<div class="a" style="left:0;top:858px;width:1586px;height:2px;background:#555"></div>
<div class="a b" style="left:2px;top:860px;width:52px;height:38px;box-sizing:border-box;background:#d4d0c8;border:1px solid;border-color:#fff #555 #555 #fff"></div>
<svg style="left:5px;top:872px" width="15" height="15"><path d="M1 2l6-1v6H1z" fill="#e8602c"/><path d="M8 1l6 1v5H8z" fill="#58a838"/><path d="M1 8h6v6l-6-1z" fill="#4888e0"/><path d="M8 8h6v5l-6 1z" fill="#f0c030"/></svg>
<div class="a b" style="left:21px;top:871px;font-size:12px">Start</div>
<div class="a" style="left:63px;top:860px;width:159px;height:38px;box-sizing:border-box;background:#fff;border:1px solid;border-color:#555 #d4d0c8 #d4d0c8 #555"></div>
<svg style="left:69px;top:868px" width="29" height="21"><use href="#logo" width="29" height="21"/></svg>
<div class="a b" style="left:102px;top:871px;font-size:12px;letter-spacing:.2px">Interactive [2] - 0...</div>
<div class="a" style="left:1408px;top:860px;width:1px;height:38px;background:#808080"></div>
<svg style="left:1415px;top:871px" width="16" height="16"><path d="M1 1h5v5H1z" fill="#f0a030"/><path d="M6 1h9v7H6z" fill="#2090c0"/><path d="M1 7h7v8H1z" fill="#58a838"/><path d="M8 8h6v7H8z" fill="#d83020"/></svg>
<svg style="left:1439px;top:874px" width="17" height="11"><rect y="2" width="14" height="7" fill="#60c030" stroke="#222"/><path d="M15 1h2v7h-2z" fill="#222"/><path d="M5 9h7" stroke="#e8c020"/></svg>
<svg style="left:1463px;top:870px" width="16" height="17"><rect x="4" y="3" width="11" height="11" fill="#c8c8c8" stroke="#777"/><rect x="1" y="0" width="5" height="12" fill="#eee" stroke="#555"/><path d="M3 14h9" stroke="#555"/></svg>
<svg style="left:1487px;top:871px" width="16" height="16"><path d="M1 5h3l4-4v14l-4-4H1z" fill="#e8e8e8" stroke="#888"/><circle cx="11" cy="11" r="4.500" fill="#e01818"/><path d="M9 9l4 4M13 9l-4 4" stroke="#fff" stroke-width="1.300"/></svg>
<div class="a" style="left:1531px;top:864px">17:48</div>
<div class="a" style="left:1516px;top:880px;letter-spacing:.1px">21/07/2017</div>
<svg style="left:1580px;top:873px" width="6" height="14"><rect width="8" height="12" fill="#3a6ab8" stroke="#777"/></svg>
</body></html>
